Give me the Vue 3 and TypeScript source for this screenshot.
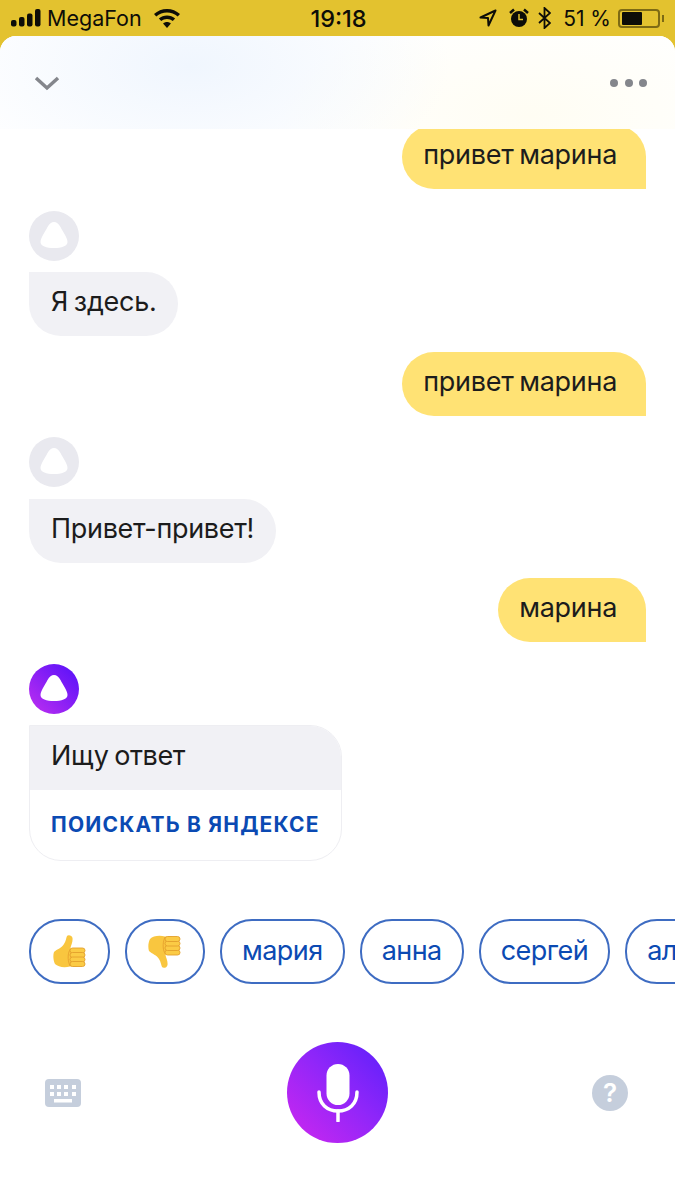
<script setup lang="ts">
interface Message {
  from: 'me' | 'alice'
  text: string
}

const messages: Message[] = [
  { from: 'me', text: 'привет марина' },
  { from: 'alice', text: 'Я здесь.' },
  { from: 'me', text: 'привет марина' },
  { from: 'alice', text: 'Привет-привет!' },
  { from: 'me', text: 'марина' },
]

const names = ['мария', 'анна', 'сергей', 'александр']
const logo = 'M25.5 11C28 11 30 12.5 32 16C34 20 39 27 39 31C39 35 33 37 25.5 37C18 37 12 35 12 31C12 27 17 20 19 16C21 12.5 23 11 25.500 11Z'
const fingers = [13, 17.5, 22, 26.5]
</script>

<template>
  <div class="screen">
    <div class="status">
      <div class="status-left">
        <svg width="30" height="18" viewBox="0 0 30 18" fill="#0d0d08">
          <rect x="0" y="11" width="5.500" height="6.500" rx="2" />
          <rect x="8" y="8" width="5.500" height="9.500" rx="2" />
          <rect x="16" y="4.500" width="5.500" height="13" rx="2" />
          <rect x="24" y="0" width="5.500" height="17.500" rx="2" />
        </svg>
        <span class="carrier">MegaFon</span>
        <svg class="wifi" width="26" height="19" viewBox="0 0 26 19" fill="#0d0d08">
          <path d="M13 0C18 0 22.400 1.900 26 5L23.700 7.600C20.700 5 17 3.500 13 3.500C9 3.500 5.300 5 2.300 7.600L0 5C3.600 1.900 8 0 13 0Z" />
          <path d="M13 6.500C16 6.500 18.900 7.600 21.100 9.600L18.800 12.100C17.200 10.700 15.200 10 13 10C10.800 10 8.800 10.700 7.200 12.100L4.900 9.600C7.100 7.600 10 6.500 13 6.500Z" />
          <path d="M13 13C14.500 13 15.800 13.500 16.900 14.500L13 19L9.100 14.500C10.200 13.500 11.500 13 13 13Z" />
        </svg>
      </div>
      <div class="clock">19:18</div>
      <div class="status-right">
        <svg class="nav" width="18" height="18" viewBox="0 0 18 18" fill="none" stroke="#0d0d08" stroke-width="2">
          <path d="M16.500 1.500L1.500 8.500L9 9L9.500 16.500Z" stroke-linejoin="round" />
        </svg>
        <svg width="20" height="20" viewBox="0 0 20 20" fill="#0d0d08">
          <circle cx="10" cy="11" r="8" />
          <path d="M1 5L5 1.500M19 5L15 1.500" stroke="#0d0d08" stroke-width="2.500" />
          <path d="M10 6V11.500H14" stroke="#e3c22f" stroke-width="1.500" fill="none" />
        </svg>
        <svg width="13" height="22" viewBox="0 0 13 22" fill="none" stroke="#0d0d08" stroke-width="1.800">
          <path d="M1 6L12 16L6.500 21V1L12 6L1 16" />
        </svg>
        <span class="battery-text">51 %</span>
        <div class="battery"><div class="battery-level"></div></div>
      </div>
    </div>

    <div class="card">
      <div class="header">
        <svg width="26" height="16" viewBox="0 0 26 16" fill="none" stroke="#84868c" stroke-width="3.500">
          <path d="M2 3L13 13L24 3" />
        </svg>
        <div class="dots"><i></i><i></i><i></i></div>
      </div>

      <div class="chat">
        <template v-for="(m, i) in messages" :key="i">
          <div v-if="m.from === 'me'" class="bubble mine">{{ m.text }}</div>
          <div v-else class="reply">
            <svg class="avatar" width="50" height="50" viewBox="0 0 50 50">
              <circle cx="25" cy="25" r="25" fill="#e9e9ef" />
              <path :d="logo" fill="#fff" transform="translate(-0.500 0)" />
            </svg>
            <div class="bubble theirs">{{ m.text }}</div>
          </div>
        </template>

        <div class="reply">
          <svg class="avatar" width="50" height="50" viewBox="0 0 50 50">
            <defs>
              <linearGradient id="alice" x1="1" y1="0" x2="0" y2="1">
                <stop offset="0" stop-color="#5310fa" />
                <stop offset="1" stop-color="#c02ff0" />
              </linearGradient>
            </defs>
            <circle cx="25" cy="25" r="25" fill="url(#alice)" />
            <path :d="logo" fill="#fff" transform="translate(-0.500 0)" />
          </svg>
          <div class="answer">
            <div class="answer-text">Ищу ответ</div>
            <div class="answer-link">ПОИСКАТЬ В ЯНДЕКСЕ</div>
          </div>
        </div>
      </div>

      <div class="chips">
        <div class="chip emoji">
          <svg width="33" height="33" viewBox="0 0 33 33">
            <path d="M1 17C4 14 9 13 11 9C13 6 13 3 14 1C15 -0.500 19 0 19.500 3C20 7 18 10 17.500 13L24 31.500L17 31.500C11 33 5 32 2 29C0 25 0 20 1 17Z" fill="#f9c63f" />
            <path d="M17.500 14C15 17 14 24 17 31" stroke="#e9a52f" stroke-width="1" fill="none" />
            <rect v-for="y in fingers" :key="y" x="17" :y="y" width="15" height="5" rx="2.500" fill="#fbcb45" stroke="#e3a02c" stroke-width="0.900" />
          </svg>
        </div>
        <div class="chip emoji">
          <svg class="flipped" width="33" height="33" viewBox="0 0 33 33">
            <path d="M1 17C4 14 9 13 11 9C13 6 13 3 14 1C15 -0.500 19 0 19.500 3C20 7 18 10 17.500 13L24 31.500L17 31.500C11 33 5 32 2 29C0 25 0 20 1 17Z" fill="#f9c63f" />
            <path d="M17.500 14C15 17 14 24 17 31" stroke="#e9a52f" stroke-width="1" fill="none" />
            <rect v-for="y in fingers" :key="y" x="17" :y="y" width="15" height="5" rx="2.500" fill="#fbcb45" stroke="#e3a02c" stroke-width="0.900" />
          </svg>
        </div>
        <div v-for="n in names" :key="n" class="chip">{{ n }}</div>
      </div>

      <div class="controls">
        <svg width="36" height="28" viewBox="0 0 36 28">
          <rect width="36" height="28" rx="4" fill="#c5cedc" />
          <g fill="#fff">
            <rect x="5" y="6" width="4" height="4" /><rect x="12" y="6" width="4" height="4" />
            <rect x="19" y="6" width="4" height="4" /><rect x="27" y="6" width="4" height="4" />
            <rect x="5" y="13" width="4" height="4" /><rect x="12" y="13" width="4" height="4" />
            <rect x="19" y="13" width="4" height="4" /><rect x="27" y="13" width="4" height="4" />
            <rect x="9" y="20" width="18" height="3.500" />
          </g>
        </svg>
        <div class="mic">
          <svg width="42" height="58" viewBox="0 0 42 58" fill="none" stroke="#fff" stroke-width="3.500">
            <rect x="9.500" y="0" width="23" height="41" rx="11.500" fill="#fff" stroke="none" />
            <path d="M2 28C2 40 10 47 21 47C32 47 40 40 40 28" stroke-linecap="round" />
            <path d="M21 47V57" stroke-linecap="round" />
          </svg>
        </div>
        <div class="help">?</div>
      </div>
    </div>
  </div>
</template>

<style>
html, body {
  margin: 0;
  background: #e3c22f;
}
</style>

<style scoped>
.screen {
  width: 675px;
  height: 1200px;
  overflow: hidden;
  display: flex;
  flex-direction: column;
  background: #e3c22f;
  font-family: Inter, "Noto Sans", sans-serif;
}
.status {
  height: 36px;
  flex: none;
  display: grid;
  grid-template-columns: 1fr auto 1fr;
  align-items: center;
  padding: 0 9px 0 11px;
  color: #0d0d08;
  font-size: 21.5px;
}
.status-left, .status-right {
  display: flex;
  align-items: center;
}
.status-right {
  justify-content: flex-end;
  gap: 9px;
}
.carrier {
  margin-left: 6px;
}
.wifi {
  margin-left: 12px;
}
.clock {
  font-weight: 500;
  font-size: 23.5px;
}
.nav {
  margin-right: 3px;
}
.battery-text {
  margin-left: 3px;
  font-size: 21px;
}
.battery {
  width: 42px;
  height: 19px;
  box-sizing: border-box;
  border: 2px solid #7d6a14;
  border-radius: 4px;
  padding: 1px 2px;
  margin-left: -2px;
  margin-right: 6px;
  position: relative;
}
.battery::after {
  content: "";
  position: absolute;
  right: -6px;
  top: 4px;
  width: 2px;
  height: 7px;
  background: #7d6a14;
}
.battery-level {
  width: 20px;
  height: 100%;
  background: #0d0d08;
  border-radius: 1px;
}
.card {
  flex: 1;
  min-height: 0;
  display: flex;
  flex-direction: column;
  background: #fff;
  border-radius: 16px 16px 0 0;
  overflow: hidden;
}
.header {
  height: 93px;
  flex: none;
  display: flex;
  align-items: center;
  justify-content: space-between;
  padding: 0 28px 0 34px;
  box-sizing: border-box;
  background:
    radial-gradient(ellipse 260px 130px at 190px 30px, #f0f6fe 0%, rgba(240, 246, 254, 0) 100%),
    radial-gradient(ellipse 260px 110px at 530px 80px, #fffdf3 0%, rgba(255, 253, 243, 0) 100%),
    #fff;
}
.dots {
  display: flex;
  gap: 6.5px;
}
.dots i {
  width: 8px;
  height: 8px;
  border-radius: 50%;
  background: #84868c;
}
.chat {
  height: 732px;
  flex: none;
  overflow: hidden;
  display: flex;
  flex-direction: column;
  align-items: flex-start;
  padding: 0 29px;
  box-sizing: border-box;
}
.bubble {
  flex: none;
  height: 64px;
  line-height: 60px;
  font-size: 27px;
  letter-spacing: -0.3px;
  word-spacing: -1.5px;
  border-radius: 32px;
  color: #1c1c1c;
  box-sizing: border-box;
  white-space: nowrap;
}
.mine {
  align-self: flex-end;
  padding: 0 29px 0 21px;
  background: #ffe274;
  border-bottom-right-radius: 0;
  margin-bottom: 21.5px;
}
.mine:first-child {
  margin-top: -4px;
}
.theirs {
  padding: 0 22px 0 22px;
  background: #f1f1f5;
  border-top-left-radius: 0;
}
.reply {
  flex: none;
  display: flex;
  flex-direction: column;
  align-items: flex-start;
  gap: 11.5px;
  margin-bottom: 15.5px;
}
.avatar {
  display: block;
}
.answer {
  width: 313px;
  height: 136px;
  box-sizing: border-box;
  border-radius: 0 32px 32px 32px;
  border: 1px solid #eeeef2;
  overflow: hidden;
}
.answer-text {
  height: 64px;
  line-height: 60px;
  padding-left: 21px;
  font-size: 27px;
  letter-spacing: -0.4px;
  word-spacing: -1.5px;
  color: #1c1c1c;
  background: #f1f1f5;
}
.answer-link {
  padding-left: 21px;
  line-height: 70px;
  font-size: 21px;
  font-weight: 700;
  letter-spacing: 1.2px;
  color: #0b4ab3;
  white-space: nowrap;
}
.chips {
  margin-top: 58px;
  flex: none;
  display: flex;
  gap: 15px;
  padding-left: 29px;
  overflow: hidden;
}
.chip {
  height: 65px;
  flex: none;
  box-sizing: border-box;
  padding: 0 20px 3px;
  display: flex;
  align-items: center;
  border: 2px solid #3e6cc2;
  border-radius: 32px;
  font-size: 27px;
  letter-spacing: -0.55px;
  color: #0b4ab3;
}
.emoji {
  width: 80.5px;
  justify-content: center;
  padding: 0;
}
.flipped {
  transform: scaleY(-1);
}
.controls {
  margin-top: 58px;
  display: grid;
  grid-template-columns: 1fr auto 1fr;
  align-items: center;
  padding: 0 45px;
}
.mic {
  width: 101px;
  height: 101px;
  border-radius: 50%;
  background: linear-gradient(45deg, #cf27ef 0%, #8f26f9 55%, #5a20fb 100%);
  display: flex;
  align-items: center;
  justify-content: center;
}
.help {
  justify-self: end;
  margin-right: 2px;
  width: 36px;
  height: 36px;
  border-radius: 50%;
  background: #c5cedc;
  color: #fff;
  font-size: 26px;
  font-weight: 600;
  line-height: 36px;
  text-align: center;
}
</style>
